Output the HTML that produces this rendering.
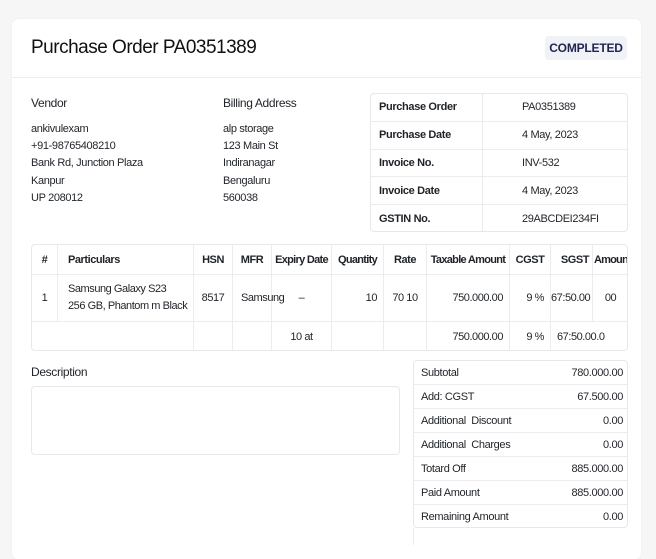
<!DOCTYPE html>
<html><head><meta charset="utf-8"><style>
*{box-sizing:border-box;margin:0;padding:0}
body{width:656px;height:545px;background:#f6f6f7;font-family:"Liberation Sans",sans-serif;color:#1f2328;position:relative;overflow:hidden;font-size:11.5px;letter-spacing:-0.35px}
.card{position:absolute;left:12px;top:19px;width:629px;height:540px;background:#fff;border-radius:6px;box-shadow:0 0 2px rgba(0,0,0,.06)}
.a{position:absolute;white-space:nowrap}
.hr{position:absolute;left:12px;width:629px;top:77px;height:1px;background:#ececee}
.badge{position:absolute;left:545px;top:36px;width:82px;height:24px;background:#f1f2f7;border-radius:4px;color:#1d2550;font-weight:bold;font-size:12px;text-align:center;line-height:24px;letter-spacing:-0.2px}
table{border-collapse:collapse;position:absolute;table-layout:fixed}
.box{position:absolute;border:1px solid #e8e8ea;border-radius:4px;overflow:hidden}
td{border:1px solid #ececee;white-space:nowrap;overflow:hidden}
.it td{font-size:11px;letter-spacing:-0.45px}
.s td{border-left:none;border-right:none}
</style></head><body>
<div class="card"></div>
<div class="a" style="left:31px;top:37px;font-size:19px;color:#111;letter-spacing:-0.5px">Purchase Order PA0351389</div>
<div class="badge">COMPLETED</div>
<div class="hr"></div>

<div class="a" style="left:31px;top:96px;font-size:12px">Vendor</div>
<div class="a" style="left:31px;top:121px;line-height:17.2px;font-size:11px">ankivulexam<br>+91-98765408210<br>Bank Rd, Junction Plaza<br>Kanpur<br>UP 208012</div>
<div class="a" style="left:223px;top:96px;font-size:12px">Billing Address</div>
<div class="a" style="left:223px;top:121px;line-height:17.2px;font-size:11px">alp storage<br>123 Main St<br>Indiranagar<br>Bengaluru<br>560038</div>

<div class="box" style="left:370px;top:93px;width:258px;height:139px">
<table style="left:-1px;top:-1px;width:259px;font-size:11px">
<colgroup><col style="width:112px"><col></colgroup>
<tr style="height:27.8px"><td style="padding-left:8px;font-weight:bold">Purchase Order</td><td style="padding-left:39px">PA0351389</td></tr>
<tr style="height:27.8px"><td style="padding-left:8px;font-weight:bold">Purchase Date</td><td style="padding-left:39px">4 May, 2023</td></tr>
<tr style="height:27.8px"><td style="padding-left:8px;font-weight:bold">Invoice No.</td><td style="padding-left:39px">INV-532</td></tr>
<tr style="height:27.8px"><td style="padding-left:8px;font-weight:bold">Invoice Date</td><td style="padding-left:39px">4 May, 2023</td></tr>
<tr style="height:27.8px"><td style="padding-left:8px;font-weight:bold">GSTIN No.</td><td style="padding-left:39px">29ABCDEI234FI</td></tr>
</table></div>

<div class="box" style="left:31px;top:244px;width:597px;height:107px">
<table class="it" style="left:-1px;top:-1px;width:598px">
<colgroup><col style="width:26px"><col style="width:136px"><col style="width:39px"><col style="width:39px"><col style="width:60px"><col style="width:52px"><col style="width:43px"><col style="width:83px"><col style="width:41px"><col style="width:42px"><col></colgroup>
<tr style="height:30px;font-weight:bold">
<td style="text-align:center;font-weight:bold">#</td><td style="padding-left:10px;font-weight:bold">Particulars</td><td style="text-align:center;font-weight:bold">HSN</td><td style="text-align:center;font-weight:bold">MFR</td><td style="text-align:center;font-weight:bold;letter-spacing:-0.7px">Expiry Date</td><td style="text-align:center;font-weight:bold;letter-spacing:-0.7px">Quantity</td><td style="text-align:center;font-weight:bold">Rate</td><td style="text-align:center;font-weight:bold;letter-spacing:-0.7px">Taxable Amount</td><td style="text-align:center;font-weight:bold">CGST</td><td style="text-align:right;padding-right:3px;font-weight:bold">SGST</td><td style="font-weight:bold;letter-spacing:-0.8px;padding-left:1px">Amount</td></tr>
<tr style="height:47px">
<td style="text-align:center">1</td><td style="padding-left:10px;line-height:17px">Samsung Galaxy S23<br>256 GB, Phantom m Black</td><td style="text-align:center">8517</td><td style="padding-left:8px;overflow:visible">Samsung</td><td style="text-align:center">–</td><td style="text-align:right;padding-right:6px">10</td><td style="text-align:center">70 10</td><td style="text-align:right;padding-right:6px">750.000.00</td><td style="text-align:right;padding-right:6px">9 %</td><td style="text-align:right;padding-right:3px">67:50.00</td><td style="text-align:center">00</td></tr>
<tr style="height:30px">
<td style="border-right:none"></td><td style="border-left:none"></td><td></td><td></td><td style="text-align:center">10 at</td><td></td><td></td><td style="text-align:right;padding-right:6px">750.000.00</td><td style="text-align:right;padding-right:6px">9 %</td><td colspan="2" style="padding-left:6px">67:50.00.0</td></tr>
</table></div>

<div class="a" style="left:31px;top:365px;font-size:12px">Description</div>
<div class="box" style="left:31px;top:386px;width:369px;height:69px"></div>

<div class="box" style="left:413px;top:360px;width:215px;height:168px">
<table class="s" style="left:-1px;top:-1px;width:216px;font-size:11px">
<tr style="height:24px"><td style="padding-left:8px">Subtotal</td><td style="text-align:right;padding-right:6px">780.000.00</td></tr>
<tr style="height:24px"><td style="padding-left:8px">Add: CGST</td><td style="text-align:right;padding-right:6px">67.500.00</td></tr>
<tr style="height:24px"><td style="padding-left:8px">Additional&nbsp; Discount</td><td style="text-align:right;padding-right:6px">0.00</td></tr>
<tr style="height:24px"><td style="padding-left:8px">Additional&nbsp; Charges</td><td style="text-align:right;padding-right:6px">0.00</td></tr>
<tr style="height:24px"><td style="padding-left:8px">Totard Off</td><td style="text-align:right;padding-right:6px">885.000.00</td></tr>
<tr style="height:24px"><td style="padding-left:8px">Paid Amount</td><td style="text-align:right;padding-right:6px">885.000.00</td></tr>
<tr style="height:24px"><td style="padding-left:8px">Remaining Amount</td><td style="text-align:right;padding-right:6px">0.00</td></tr>
</table></div>
<div class="a" style="left:413px;top:528px;width:1px;height:17px;background:#ececee"></div>
</body></html>
